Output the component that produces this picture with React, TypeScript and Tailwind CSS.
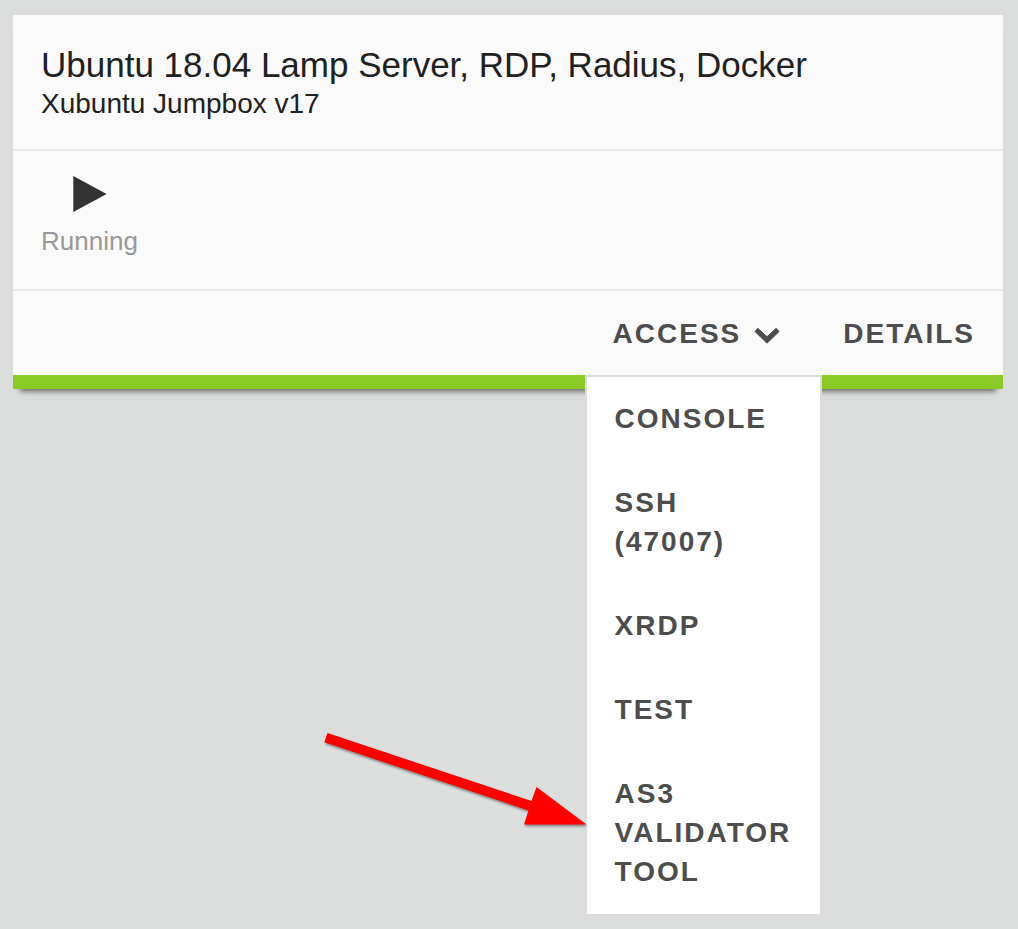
import { useState } from "react";

const accessOptions = ["Console", "SSH (47007)", "XRDP", "Test", "AS3 Validator Tool"];

function PlayIcon() {
  return (
    <svg className="ml-8 h-9 w-[34px]" viewBox="0 0 34 36" fill="#333333" aria-hidden="true">
      <path d="M0.3 0 L33.6 18 L0.3 36 Z" />
    </svg>
  );
}

function ChevronIcon() {
  return (
    <svg
      className="h-[22px] w-7"
      viewBox="0 0 28 22"
      fill="#4d4d4d"
      stroke="#4d4d4d"
      strokeWidth="1"
      strokeLinejoin="round"
      aria-hidden="true"
    >
      <path d="M4.8 5.3 L14 13.7 L23.2 5.3 L26 8.6 L14 20.2 L2 8.6 Z" />
    </svg>
  );
}

function PointerArrow() {
  return (
    <svg
      className="pointer-events-none absolute right-full bottom-[74px] -mr-2 h-[112px] w-[275px] overflow-visible"
      viewBox="320 728 275 112"
      fill="#ff0000"
      aria-hidden="true"
    >
      <path
        className="drop-shadow-[1px_2px_1px_rgba(0,0,0,0.4)]"
        d="M327.5 733 L531.5 801 L536.5 787 L586.5 824.5 L524 824.5 L528.5 810.5 L324.3 742.3 Z"
      />
    </svg>
  );
}

export default function App() {
  const [open, setOpen] = useState(true);

  return (
    <main className="min-h-screen bg-[#dcdedd] pt-[15px] pr-[15px] pl-[13px] font-['Liberation_Sans',Arial,sans-serif]">
      <article className="border-b-[14px] border-[#8ac926] bg-[#fafafa] shadow-[0_9px_6px_-7px_rgba(0,0,0,0.6)]">
        <header className="border-b-2 border-[#ebebeb] px-7 pt-[30px] pb-[26px] text-[#212121]">
          <h1 className="text-[35px] leading-[40px]">Ubuntu 18.04 Lamp Server, RDP, Radius, Docker</h1>
          <p className="text-[28px] leading-[38px]">Xubuntu Jumpbox v17</p>
        </header>

        <section className="border-b-2 border-[#ebebeb] px-7 pt-[25px] pb-[30px]">
          <PlayIcon />
          <p className="mt-[11px] text-[26px] leading-9 text-[#999999]">Running</p>
        </section>

        <footer className="flex justify-end text-[28px] leading-[39px] font-bold tracking-[2px] text-[#4d4d4d] uppercase">
          <div className="relative mr-[6px]">
            <button
              type="button"
              aria-expanded={open}
              onClick={() => setOpen(!open)}
              className="flex items-center gap-3 px-7 pt-[23px] pb-[22px] tracking-[2px] uppercase"
            >
              Access
              <ChevronIcon />
            </button>
            {open && (
              <div className="absolute top-full left-0 w-[237px] border-2 border-[#dddddd] bg-white">
                <ul>
                  {accessOptions.map((option) => (
                    <li key={option}>
                      <a href="#" className="block px-7 pt-[22px] pb-[23px]">
                        {option}
                      </a>
                    </li>
                  ))}
                </ul>
                <PointerArrow />
              </div>
            )}
          </div>
          <button type="button" className="px-7 pt-[23px] pb-[22px] tracking-[2px] uppercase">
            Details
          </button>
        </footer>
      </article>
    </main>
  );
}
